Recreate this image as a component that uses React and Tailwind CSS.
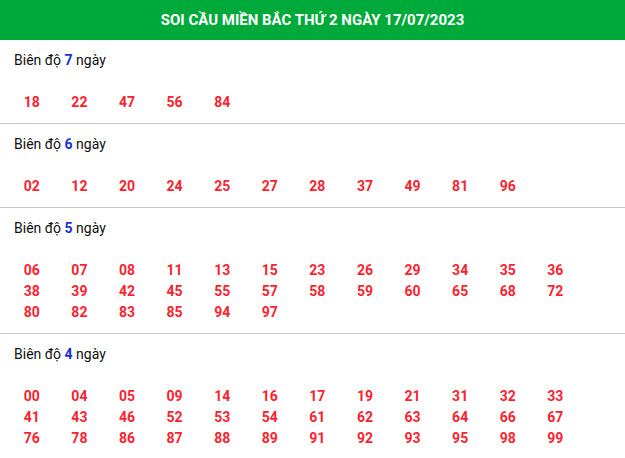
const groups = [
  { days: 7, nums: ['18', '22', '47', '56', '84'] },
  { days: 6, nums: ['02', '12', '20', '24', '25', '27', '28', '37', '49', '81', '96'] },
  {
    days: 5,
    nums: ['06', '07', '08', '11', '13', '15', '23', '26', '29', '34', '35', '36', '38', '39', '42', '45', '55', '57', '58', '59', '60', '65', '68', '72', '80', '82', '83', '85', '94', '97'],
  },
  {
    days: 4,
    nums: ['00', '04', '05', '09', '14', '16', '17', '19', '21', '31', '32', '33', '41', '43', '46', '52', '53', '54', '61', '62', '63', '64', '66', '67', '76', '78', '86', '87', '88', '89', '91', '92', '93', '95', '98', '99'],
  },
];

const Group = ({ days, nums }) => (
  <div className="pt-[10px] pb-[10px] border-b border-[#c8c8c8]">
    <p className="px-[14px] text-[14px] leading-[21px] text-[#111]">
      Biên độ <span className="font-bold text-[#1a2fd4]">{days}</span> ngày
    </p>
    <div className="mt-[21px] pl-2 grid grid-cols-[repeat(12,47.6px)]">
      {nums.map((n) => (
        <span key={n} className="text-center text-[14px] leading-[21px] font-bold text-[#f9232f]">
          {n}
        </span>
      ))}
    </div>
  </div>
);

export default function App() {
  return (
    <div className="w-[625px] h-[458px] overflow-hidden bg-white font-['Roboto',sans-serif]">
      <div className="h-10 bg-[#00aa3a] flex items-center justify-center">
        <h1 className="text-white font-bold text-[15px] uppercase">SOI CẦU MIỀN BẮC THỨ 2 NGÀY 17/07/2023</h1>
      </div>
      {groups.map((g) => (
        <Group key={g.days} days={g.days} nums={g.nums} />
      ))}
    </div>
  );
}
